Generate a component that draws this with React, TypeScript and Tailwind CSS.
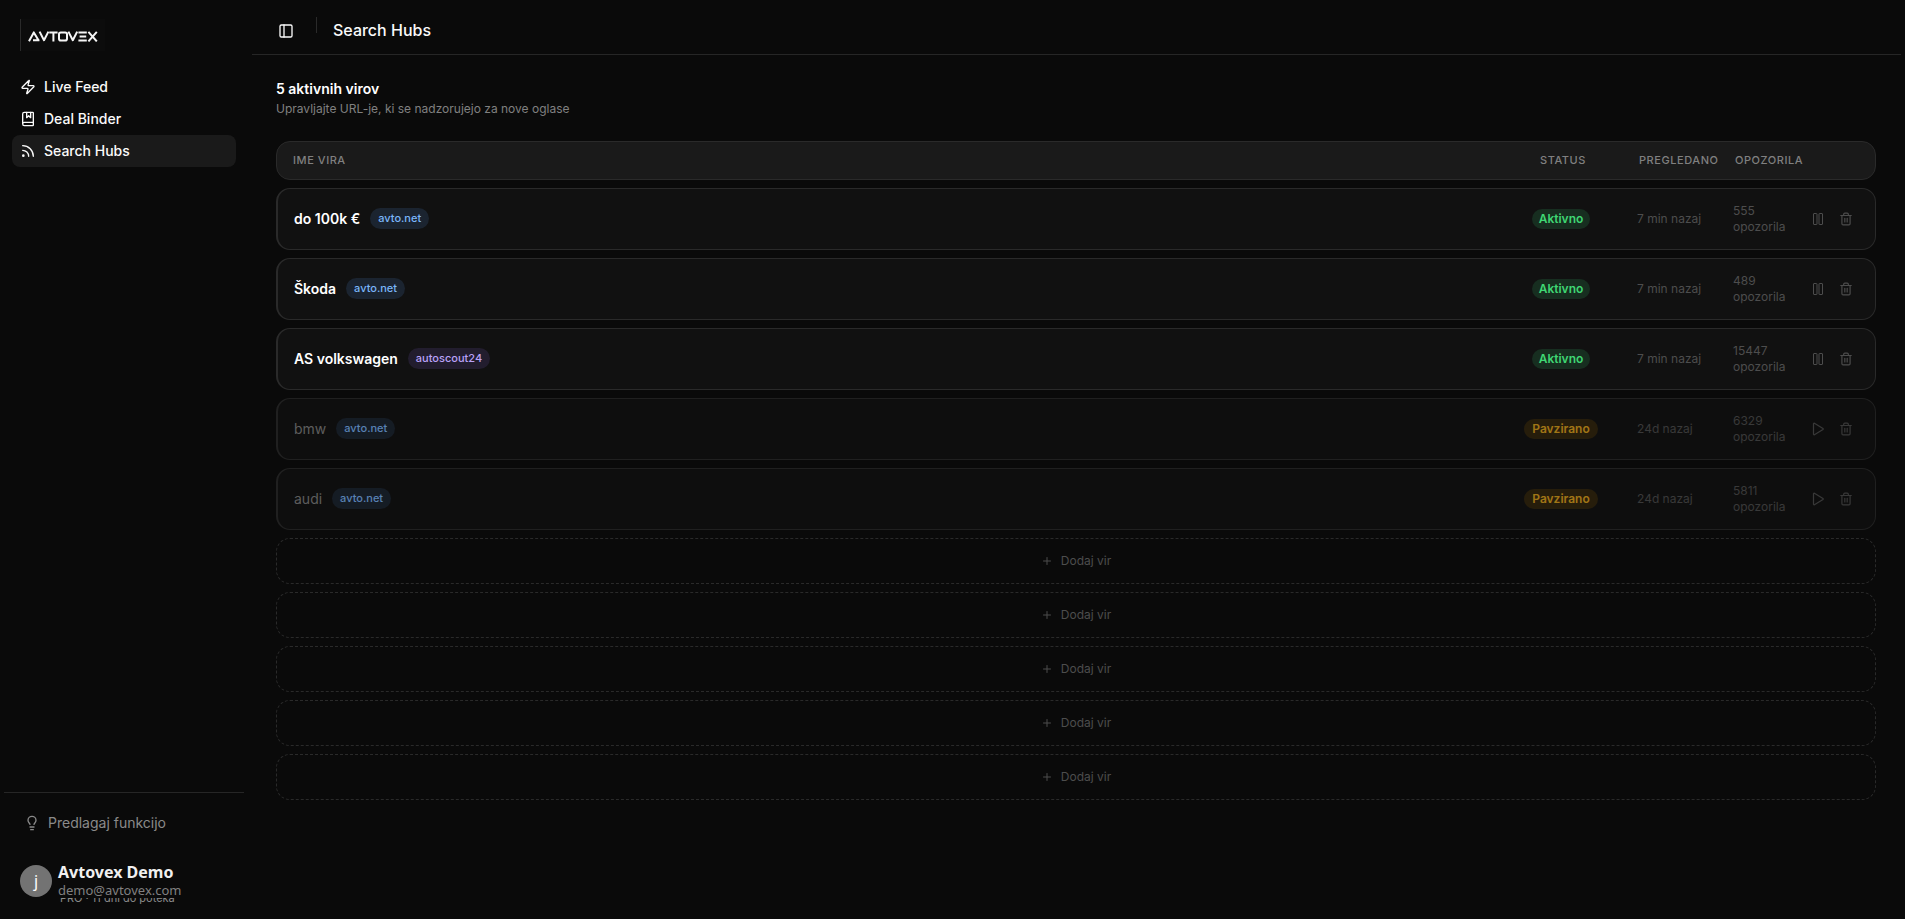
import { BookMarked, Lightbulb, PanelLeft, Plus, Rss, Trash2, Zap } from 'lucide-react';

const NAV_ITEMS = [
  { label: 'Live Feed', icon: Zap, active: false },
  { label: 'Deal Binder', icon: BookMarked, active: false },
  { label: 'Search Hubs', icon: Rss, active: true },
];

const HUBS = [
  { name: 'do 100k €', source: 'avto.net', active: true, scanned: '7 min nazaj', alerts: 555 },
  { name: 'Škoda', source: 'avto.net', active: true, scanned: '7 min nazaj', alerts: 489 },
  { name: 'AS volkswagen', source: 'autoscout24', active: true, scanned: '7 min nazaj', alerts: 15447 },
  { name: 'bmw', source: 'avto.net', active: false, scanned: '24d nazaj', alerts: 6329 },
  { name: 'audi', source: 'avto.net', active: false, scanned: '24d nazaj', alerts: 5811 },
];

const EMPTY_SLOTS = [1, 2, 3, 4, 5];

type Hub = (typeof HUBS)[number];

function Logo() {
  return (
    <svg
      width="70"
      height="11"
      viewBox="0 0 70 11"
      fill="none"
      stroke="#f5f5f5"
      strokeWidth="2"
      strokeLinejoin="round"
      role="img"
      aria-label="Avtovex"
    >
      <path d="M1 10.2 5.8 1.4l5 8.4M5 9.2h6.4" />
      <path d="m11.6.6 4.4 8.6L20.4.6" />
      <path d="M21.2 1.5h8.4M25.4 1.5v9" />
      <rect x="31" y="1.5" width="8" height="8" rx="1.8" />
      <path d="m40.4.6 4.4 8.6L49.2.6" />
      <path d="M50.4 1.5h8.4M51.6 5.5h6.6M50.4 9.5h8.4" />
      <path d="m60.4.8 8.4 9.6M68.8.8l-8.4 9.6" />
    </svg>
  );
}

function Sidebar() {
  return (
    <aside className="flex w-62 shrink-0 flex-col">
      <div className="px-5 pt-[19px]">
        <div className="flex h-8 w-[85px] items-center border-l border-[#2a2a2a] bg-[#0c0c0c] pt-0.5 pl-[7px]">
          <Logo />
        </div>
      </div>

      <nav className="mt-5 flex flex-col px-3">
        {NAV_ITEMS.map(({ label, icon: Icon, active }) => (
          <a
            key={label}
            href="#"
            className={`flex h-8 items-center gap-2 rounded-lg px-2 text-sm font-medium text-[#fafafa] ${
              active ? 'bg-[#1a1a1a]' : ''
            }`}
          >
            <Icon size={16} />
            {label}
          </a>
        ))}
      </nav>

      <div className="mx-1 mt-auto border-t border-[#262626] px-4 pt-3 pb-5">
        <button type="button" className="flex h-9 items-center gap-2 px-1 text-sm text-[#8a8a8a]">
          <Lightbulb size={16} />
          Predlagaj funkcijo
        </button>
        <div className="mt-[22px] flex h-9 items-center gap-1.5">
          <div className="flex size-8 shrink-0 items-center justify-center rounded-full bg-[#737373] font-['Noto_Sans',sans-serif] text-base text-white">
            j
          </div>
          <div className="flex h-[38px] flex-col font-['Noto_Sans',sans-serif]">
            <span className="text-base leading-5 font-bold text-[#f0f0f0]">Avtovex Demo</span>
            <span className="text-[13px] leading-4 text-[#808080]">demo@avtovex.com</span>
            <span className="flex h-[6px] shrink-0 items-end overflow-hidden pl-0.5 font-[Inter,sans-serif] text-[11px] leading-3 text-[#8a8a8a]">
              PRO · 11 dni do poteka
            </span>
          </div>
        </div>
      </div>
    </aside>
  );
}

function PauseIcon() {
  return (
    <svg width="14" height="14" viewBox="0 0 14 14" fill="none" stroke="currentColor" aria-hidden="true">
      <rect x="2.5" y="1.5" width="3.5" height="11" rx=".5" />
      <rect x="8" y="1.5" width="3.5" height="11" rx=".5" />
    </svg>
  );
}

function PlayIcon() {
  return (
    <svg
      width="14"
      height="14"
      viewBox="0 0 14 14"
      fill="none"
      stroke="currentColor"
      strokeWidth="1.2"
      strokeLinejoin="round"
      aria-hidden="true"
    >
      <path d="M2.5 1.8v10.4a.6.6 0 0 0 .9.5l8.6-5.2a.6.6 0 0 0 0-1L3.4 1.3a.6.6 0 0 0-.9.5Z" />
    </svg>
  );
}

function HubRow({ hub }: { hub: Hub }) {
  return (
    <tr
      className={`grid h-[62px] grid-cols-[1fr_120px_80px_54px_57px] items-center gap-4 rounded-[14px] border border-l-2 border-[#2a2a2a] bg-[#111111] pr-[15px] pl-4 ${
        hub.active ? '' : 'opacity-70'
      }`}
    >
      <td className="flex items-center gap-2.5">
        <span className={hub.active ? 'text-sm font-semibold text-white' : 'text-sm text-[#808080]'}>{hub.name}</span>
        <span
          className={`mb-0.5 rounded-full px-2 text-[11px] leading-[21px] font-medium ${
            hub.source === 'avto.net' ? 'bg-[#1b2430] text-[#7ab5f9]' : 'bg-[#221d2e] text-[#b9a2f8]'
          }`}
        >
          {hub.source}
        </span>
      </td>
      <td className="flex justify-center">
        <span
          className={`rounded-full text-xs leading-5 font-semibold ${
            hub.active ? 'bg-[#172e20] px-[7px] text-[#3fd673]' : 'bg-[#33260c] px-2 text-[#e0a41c]'
          }`}
        >
          {hub.active ? 'Aktivno' : 'Pavzirano'}
        </span>
      </td>
      <td className="text-xs text-[#4d4d4d]">{hub.scanned}</td>
      <td className="text-xs text-[#4d4d4d]">{hub.alerts} opozorila</td>
      <td className="flex justify-end text-[#4d4d4d]">
        <button
          type="button"
          aria-label={hub.active ? 'Pavziraj' : 'Nadaljuj'}
          className="flex size-7 items-center justify-center"
        >
          {hub.active ? <PauseIcon /> : <PlayIcon />}
        </button>
        <button type="button" aria-label="Izbriši" className="flex size-7 items-center justify-center">
          <Trash2 size={14} />
        </button>
      </td>
    </tr>
  );
}

export default function App() {
  return (
    <div className="flex min-h-screen bg-[#0a0a0a] font-[Inter,sans-serif] text-[#fafafa]">
      <Sidebar />

      <main className="mx-1 min-w-0 flex-1">
        <header className="flex h-[55px] items-center border-b border-[#262626] pr-6 pl-5">
          <button type="button" aria-label="Toggle sidebar" className="flex size-7 items-center justify-center pt-2">
            <PanelLeft size={16} />
          </button>
          <div className="mr-4 mb-1 ml-4 h-4 w-px bg-[#2a2a2a]" />
          <h1 className="pt-1.5 text-base font-medium">Search Hubs</h1>
        </header>

        <section className="pt-6 pr-[25px] pl-6">
          <h2 className="text-sm font-semibold text-white">5 aktivnih virov</h2>
          <p className="text-xs leading-5 text-[#808080]">Upravljajte URL-je, ki se nadzorujejo za nove oglase</p>

          <table className="mt-[22px] block">
            <thead className="block">
              <tr className="grid h-[39px] grid-cols-[1fr_120px_80px_54px_56px] items-center gap-4 rounded-[14px] border border-[#2a2a2a] bg-[#1a1a1a] pr-3.5 pl-4 text-left text-[11px] tracking-wider text-[#808080]">
                <th className="font-medium">IME VIRA</th>
                <th className="text-center font-medium">STATUS</th>
                <th className="font-medium">PREGLEDANO</th>
                <th className="font-medium">OPOZORILA</th>
                <th aria-label="Dejanja" />
              </tr>
            </thead>
            <tbody className="mt-2 flex flex-col gap-2">
              {HUBS.map((hub) => (
                <HubRow key={hub.name} hub={hub} />
              ))}
            </tbody>
          </table>

          <div className="mt-2 flex flex-col gap-2">
            {EMPTY_SLOTS.map((slot) => (
              <button
                key={slot}
                type="button"
                className="flex h-[46px] items-center justify-center gap-2 rounded-[14px] border border-dashed border-[#2a2a2a] text-xs text-[#4d4d4d]"
              >
                <Plus size={12} />
                Dodaj vir
              </button>
            ))}
          </div>
        </section>
      </main>
    </div>
  );
}
